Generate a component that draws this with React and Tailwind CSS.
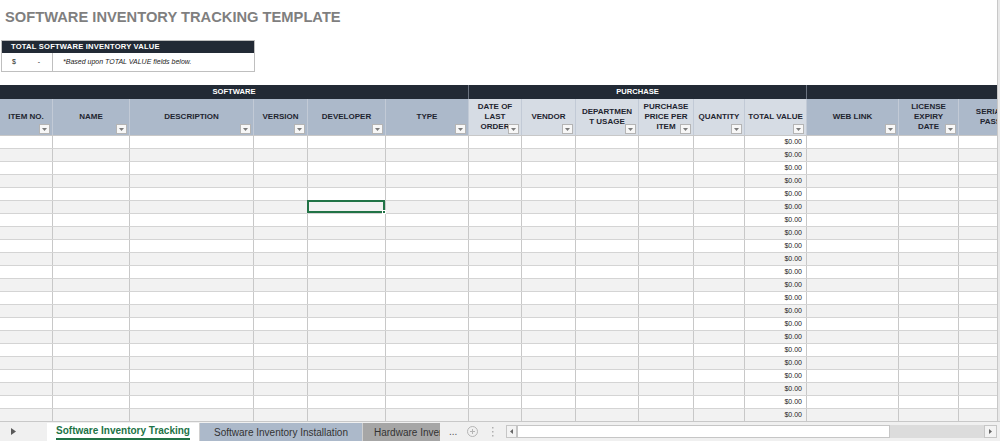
import React from 'react';

const GRID =
  'grid grid-cols-[53px_77px_124px_54px_78px_83px_53px_54px_63px_55px_51px_62px_92px_60px_64px] w-[1023px]';

const headers = [
  { lines: ['ITEM NO.'], tone: 'dark' },
  { lines: ['NAME'], tone: 'dark' },
  { lines: ['DESCRIPTION'], tone: 'dark' },
  { lines: ['VERSION'], tone: 'dark' },
  { lines: ['DEVELOPER'], tone: 'dark' },
  { lines: ['TYPE'], tone: 'dark' },
  { lines: ['DATE OF', 'LAST', 'ORDER'], tone: 'light' },
  { lines: ['VENDOR'], tone: 'light' },
  { lines: ['DEPARTMEN', 'T USAGE'], tone: 'light' },
  { lines: ['PURCHASE', 'PRICE PER', 'ITEM'], tone: 'light' },
  { lines: ['QUANTITY'], tone: 'light' },
  { lines: ['TOTAL VALUE'], tone: 'light' },
  { lines: ['WEB LINK'], tone: 'dark' },
  { lines: ['LICENSE', 'EXPIRY', 'DATE'], tone: 'dark' },
  { lines: ['SERIAL', 'PASS'], tone: 'dark', noFilter: true },
];

const rows = Array.from({ length: 22 }, (_, i) => i);

const FilterButton = () => (
  <div className="absolute right-[2px] bottom-[1px] w-[11px] h-[10px] bg-[#f7f7f7] border border-[#b4b4b4] flex items-center justify-center">
    <svg width="5" height="3" viewBox="0 0 5 3">
      <path d="M0 0 L5 0 L2.5 3 Z" fill="#7a7a7a" />
    </svg>
  </div>
);

const HeaderCell = ({ h }) => (
  <div
    className={`relative h-[36px] border-r border-[#c2cad6] flex flex-col items-center justify-center text-[8px] leading-[10px] font-bold text-[#1f2530] ${
      h.tone === 'dark' ? 'bg-[#acb9ca]' : 'bg-[#d6dce4]'
    }`}
  >
    {h.lines.map((l, i) => (
      <span key={i} className="whitespace-nowrap">{l}</span>
    ))}
    {!h.noFilter && <FilterButton />}
  </div>
);

const DataRow = ({ index }) => {
  const bg = index % 2 === 0 ? 'bg-white' : 'bg-[#f2f2f2]';
  return (
    <div className={`${GRID} h-[13px] ${bg} border-b border-[#d4d4d4]`}>
      {headers.map((_, c) => (
        <div key={c} className="relative border-r border-[#c8c8c8] h-full">
          {c === 11 && (
            <span className="absolute right-[4px] top-0 text-[7px] leading-[12px] text-[#222]">$0.00</span>
          )}
          {index === 5 && c === 4 && (
            <div className="absolute -left-[1px] -top-[1px] right-0 bottom-0 border-2 border-[#217346]">
              <div className="absolute -right-[3px] -bottom-[3px] w-[4px] h-[4px] bg-[#217346] border border-white" />
            </div>
          )}
        </div>
      ))}
    </div>
  );
};

export default function App() {
  return (
    <div className="w-[1000px] h-[441px] bg-white overflow-hidden flex flex-col font-['Liberation_Sans',Arial,sans-serif]">
      <div className="flex-1 flex overflow-hidden">
        <div className="flex-1 overflow-hidden">
          {/* title */}
          <div className="h-[34px] pt-[7px] pl-[5px]">
            <h1 className="text-[14.7px] leading-[20px] font-bold text-[#7f7f7f]">
              SOFTWARE INVENTORY TRACKING TEMPLATE
            </h1>
          </div>

          {/* total box */}
          <div className="mt-[6px] ml-[1px] w-[254px] border border-[#bfbfbf]">
            <div className="h-[12px] bg-[#222a35] text-white text-[7.6px] leading-[12px] font-bold pl-[9px] tracking-[0.2px]">
              TOTAL SOFTWARE INVENTORY VALUE
            </div>
            <div className="h-[18px] flex text-[7px] leading-[18px] text-[#222]">
              <div className="w-[51px] border-r border-[#bfbfbf] flex justify-between pl-[10px] pr-[12px]">
                <span>$</span>
                <span>-</span>
              </div>
              <div className="pl-[10px] italic">*Based upon TOTAL VALUE fields below.</div>
            </div>
          </div>

          {/* table */}
          <div className="mt-[13px]">
            <div className={`${GRID} h-[14px] bg-[#222a35] text-white text-[7.6px] leading-[14px] font-bold`}>
              <div className="col-span-6 text-center border-r border-[#6b7380]">SOFTWARE</div>
              <div className="col-span-6 text-center border-r border-[#6b7380]">PURCHASE</div>
              <div className="col-span-3" />
            </div>
            <div className={`${GRID} border-b border-[#c8c8c8]`}>
              {headers.map((h, i) => (
                <HeaderCell key={i} h={h} />
              ))}
            </div>
            {rows.map((r) => (
              <DataRow key={r} index={r} />
            ))}
          </div>
        </div>
        <div className="w-[3px] bg-[#e8e8e8] border-l border-[#c8c8c8]" />
      </div>

      {/* sheet tabs */}
      <div className="h-[20px] bg-[#f0f0f0] border-t border-[#c8c8c8] flex items-end text-[10px] whitespace-nowrap">
        <div className="w-[47px] h-full flex items-center pl-[11px] text-[#555]">
          <svg width="5" height="7" viewBox="0 0 5 7">
            <path d="M0 0 L5 3.5 L0 7 Z" fill="#5a5a5a" />
          </svg>
        </div>
        <div className="w-[152px] h-[18px] bg-white flex items-center justify-center">
          <span className="font-bold text-[#217346] leading-[14px] border-b-2 border-[#217346]">Software Inventory Tracking</span>
        </div>
        <div className="w-[163px] h-[18px] bg-[#acb9ca] border-l border-[#d0d0d0] flex items-center justify-center text-[#333]">
          Software Inventory Installation
        </div>
        <div className="w-[78px] h-[18px] bg-[#a6a6a6] border-l border-[#d0d0d0] flex items-center pl-[11px] text-[#333] overflow-hidden">
          <span className="block w-[66px] overflow-hidden">Hardware Inventory</span>
        </div>
        <div className="h-full flex items-center pl-[9px] text-[#555]">...</div>
        <div className="h-full flex items-center pl-[10px]">
          <svg width="11" height="11" viewBox="0 0 11 11">
            <circle cx="5.5" cy="5.5" r="5" fill="none" stroke="#b5b5b5" />
            <path d="M5.5 3 V8 M3 5.5 H8" stroke="#b5b5b5" />
          </svg>
        </div>
        <div className="h-full flex items-center pl-[14px]">
          <svg width="2" height="10" viewBox="0 0 2 10">
            <rect x="0" y="0" width="1.5" height="1.5" fill="#b0b0b0" />
            <rect x="0" y="4" width="1.5" height="1.5" fill="#b0b0b0" />
            <rect x="0" y="8" width="1.5" height="1.5" fill="#b0b0b0" />
          </svg>
        </div>
        <div className="h-full flex items-center pl-[12px] pr-[3px] flex-1">
          <div className="flex-1 h-[13px] flex bg-[#dcdcdc]">
            <div className="w-[11px] h-full bg-[#f3f3f3] border border-[#c6c6c6] flex items-center justify-center">
              <svg width="3" height="5" viewBox="0 0 3 5">
                <path d="M3 0 L0 2.5 L3 5 Z" fill="#666" />
              </svg>
            </div>
            <div className="w-[373px] h-full bg-white border border-[#c6c6c6]" />
            <div className="flex-1" />
            <div className="w-[13px] h-full bg-[#f3f3f3] border border-[#c6c6c6] flex items-center justify-center">
              <svg width="3" height="5" viewBox="0 0 3 5">
                <path d="M0 0 L3 2.5 L0 5 Z" fill="#666" />
              </svg>
            </div>
          </div>
        </div>
      </div>
    </div>
  );
}
